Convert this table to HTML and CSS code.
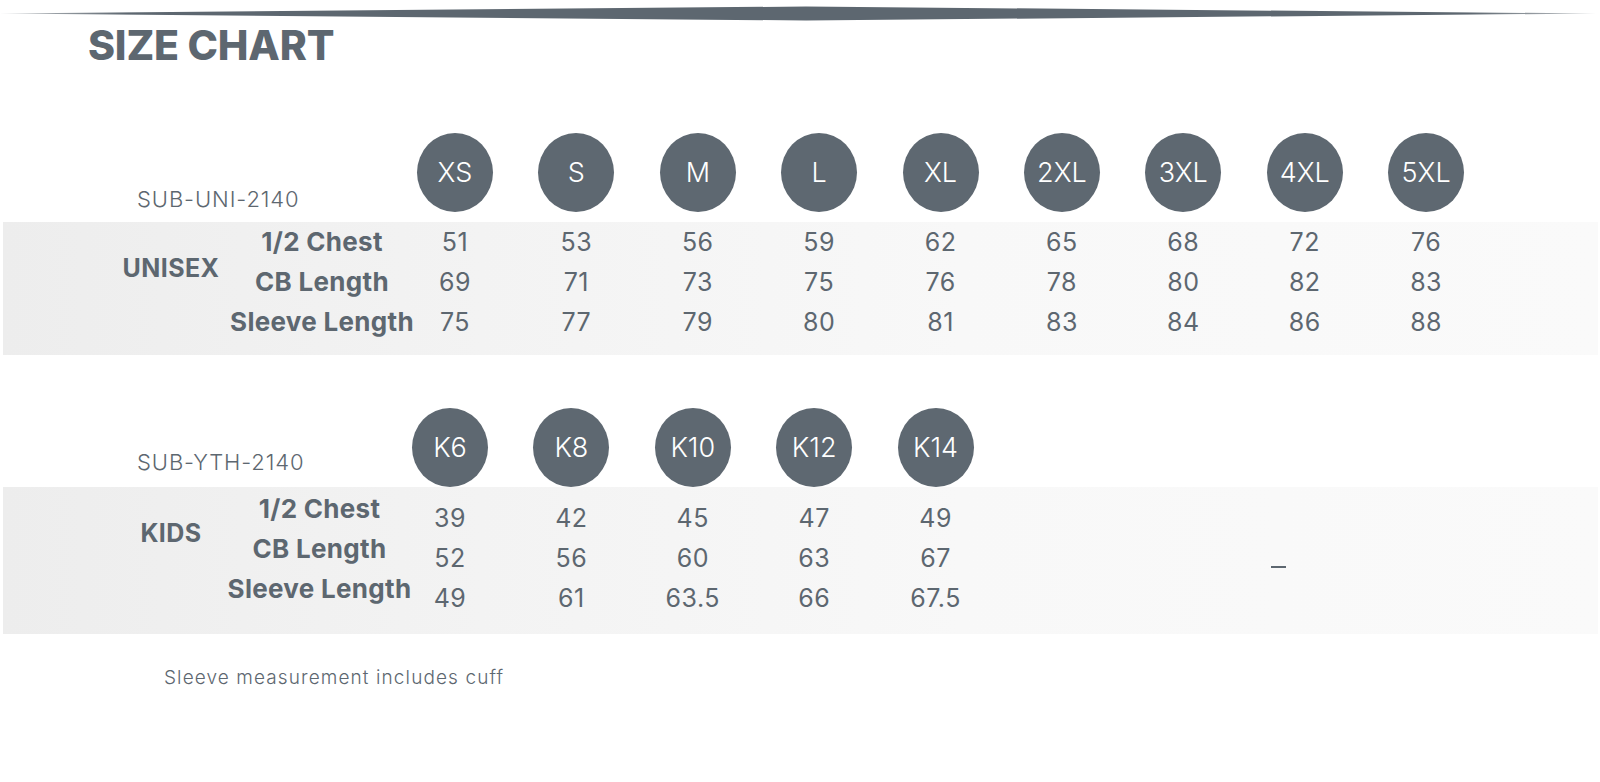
FILE: index.html
```html
<!DOCTYPE html>
<html lang="en">
<head>
<meta charset="utf-8">
<title>Size Chart</title>
<link rel="stylesheet" href="styles.css">
</head>
<body>
<div class="page">
  <svg class="topbar" width="1600" height="24" viewBox="0 0 1600 24" aria-hidden="true">
    <defs>
      <linearGradient id="barfade" x1="0" x2="1" y1="0" y2="0">
        <stop offset="0" stop-color="#5d6770" stop-opacity="0.35"/>
        <stop offset="0.08" stop-color="#5d6770" stop-opacity="1"/>
        <stop offset="0.92" stop-color="#5d6770" stop-opacity="1"/>
        <stop offset="1" stop-color="#5d6770" stop-opacity="0.35"/>
      </linearGradient>
    </defs>
    <polygon points="0,13.5 806,6.5 1596,13.5 806,20.5" fill="url(#barfade)"/>
  </svg>

  <h1 class="title">SIZE CHART</h1>

  <section class="section unisex">
    <div class="head">
      <div class="code">SUB-UNI-2140</div>
      <div class="sizes sizes-9">
        <div class="size">XS</div>
        <div class="size">S</div>
        <div class="size">M</div>
        <div class="size">L</div>
        <div class="size">XL</div>
        <div class="size">2XL</div>
        <div class="size">3XL</div>
        <div class="size">4XL</div>
        <div class="size">5XL</div>
      </div>
    </div>
    <div class="band">
      <div class="group">UNISEX</div>
      <div class="labels">
        <div class="label">1/2 Chest</div>
        <div class="label">CB Length</div>
        <div class="label">Sleeve Length</div>
      </div>
      <div class="values values-9">
        <div>51</div><div>53</div><div>56</div><div>59</div><div>62</div><div>65</div><div>68</div><div>72</div><div>76</div>
        <div>69</div><div>71</div><div>73</div><div>75</div><div>76</div><div>78</div><div>80</div><div>82</div><div>83</div>
        <div>75</div><div>77</div><div>79</div><div>80</div><div>81</div><div>83</div><div>84</div><div>86</div><div>88</div>
      </div>
    </div>
  </section>

  <section class="section kids">
    <div class="head">
      <div class="code">SUB-YTH-2140</div>
      <div class="sizes sizes-5">
        <div class="size">K6</div>
        <div class="size">K8</div>
        <div class="size">K10</div>
        <div class="size">K12</div>
        <div class="size">K14</div>
      </div>
    </div>
    <div class="band">
      <div class="group">KIDS</div>
      <div class="labels">
        <div class="label">1/2 Chest</div>
        <div class="label">CB Length</div>
        <div class="label">Sleeve Length</div>
      </div>
      <div class="values-wrap">
        <div class="values values-5">
          <div>39</div><div>42</div><div>45</div><div>47</div><div>49</div>
          <div>52</div><div>56</div><div>60</div><div>63</div><div>67</div>
          <div>49</div><div>61</div><div>63.5</div><div>66</div><div>67.5</div>
        </div>
        <div class="dash-cell"><span class="dash"></span></div>
      </div>
    </div>
  </section>

  <p class="note">Sleeve measurement includes cuff</p>
</div>
</body>
</html>
```

FILE: styles.css
```css
html, body {
  margin: 0;
  padding: 0;
  background: #ffffff;
}

body {
  font-family: Inter, "Noto Sans", "Liberation Sans", sans-serif;
  color: #5d6770;
}

.page {
  width: 1600px;
  height: 782px;
  overflow: hidden;
}

.topbar {
  display: block;
}

.title {
  margin: 0;
  padding-left: 88px;
  font-size: 41px;
  line-height: 42px;
  font-weight: 800;
  letter-spacing: -0.2px;
  color: #5d6770;
}

.head {
  display: flex;
  align-items: flex-end;
}

.unisex .head {
  margin-top: 67px;
}

.kids .head {
  margin-top: 53px;
}

.code {
  box-sizing: border-box;
  flex: none;
  padding-left: 137px;
  font-size: 22px;
  line-height: 22px;
  font-weight: 300;
  letter-spacing: 0.9px;
  white-space: nowrap;
}

.unisex .code {
  width: 417px;
  margin-bottom: 2px;
}

.kids .code {
  width: 412px;
  margin-bottom: 14px;
}

.sizes {
  display: grid;
  grid-auto-columns: 76px;
  grid-auto-flow: column;
  column-gap: 45.4px;
}

.size {
  width: 76px;
  height: 79px;
  border-radius: 50%;
  background: #5e6871;
  color: #ffffff;
  display: flex;
  align-items: center;
  justify-content: center;
  font-size: 27px;
  line-height: 1;
  font-weight: 300;
}

.band {
  box-sizing: border-box;
  margin-left: 3px;
  width: 1595px;
  display: flex;
  background: linear-gradient(90deg, #ededed 0%, #f3f3f3 30%, #f8f8f8 60%, #fafafa 100%);
}

.unisex .band {
  margin-top: 10px;
  height: 133px;
}

.kids .band {
  height: 147px;
}

.group {
  box-sizing: border-box;
  flex: none;
  width: 224px;
  padding-left: 112px;
  padding-top: 26px;
  text-align: center;
  font-size: 25px;
  line-height: 40px;
  font-weight: 700;
  letter-spacing: 0.4px;
  color: #5d6770;
}

.labels {
  flex: none;
  display: flex;
  flex-direction: column;
  align-items: center;
}

.unisex .labels {
  width: 190px;
}

.kids .labels {
  width: 185px;
  padding-top: 2px;
}

.label {
  font-size: 26px;
  line-height: 40px;
  font-weight: 700;
  letter-spacing: 0.3px;
  white-space: nowrap;
  color: #5d6770;
}

.values {
  display: grid;
  column-gap: 45.4px;
  grid-auto-rows: 40px;
  font-size: 25px;
  line-height: 40px;
  font-weight: 400;
  letter-spacing: 0.5px;
  text-align: center;
  color: #5d6770;
}

.values-9 {
  grid-template-columns: repeat(9, 76px);
}

.values-5 {
  grid-template-columns: repeat(5, 76px);
}

.values-wrap {
  display: flex;
  padding-top: 11px;
}

.dash-cell {
  flex: none;
  width: 609px;
  display: flex;
  justify-content: center;
  padding-top: 68px;
}

.dash {
  display: block;
  width: 15px;
  height: 2px;
  background: #5d6770;
}

.note {
  margin: 34px 0 0 0;
  padding-left: 164px;
  font-size: 19px;
  line-height: 20px;
  font-weight: 300;
  letter-spacing: 1.1px;
  color: #5d6770;
}
```
